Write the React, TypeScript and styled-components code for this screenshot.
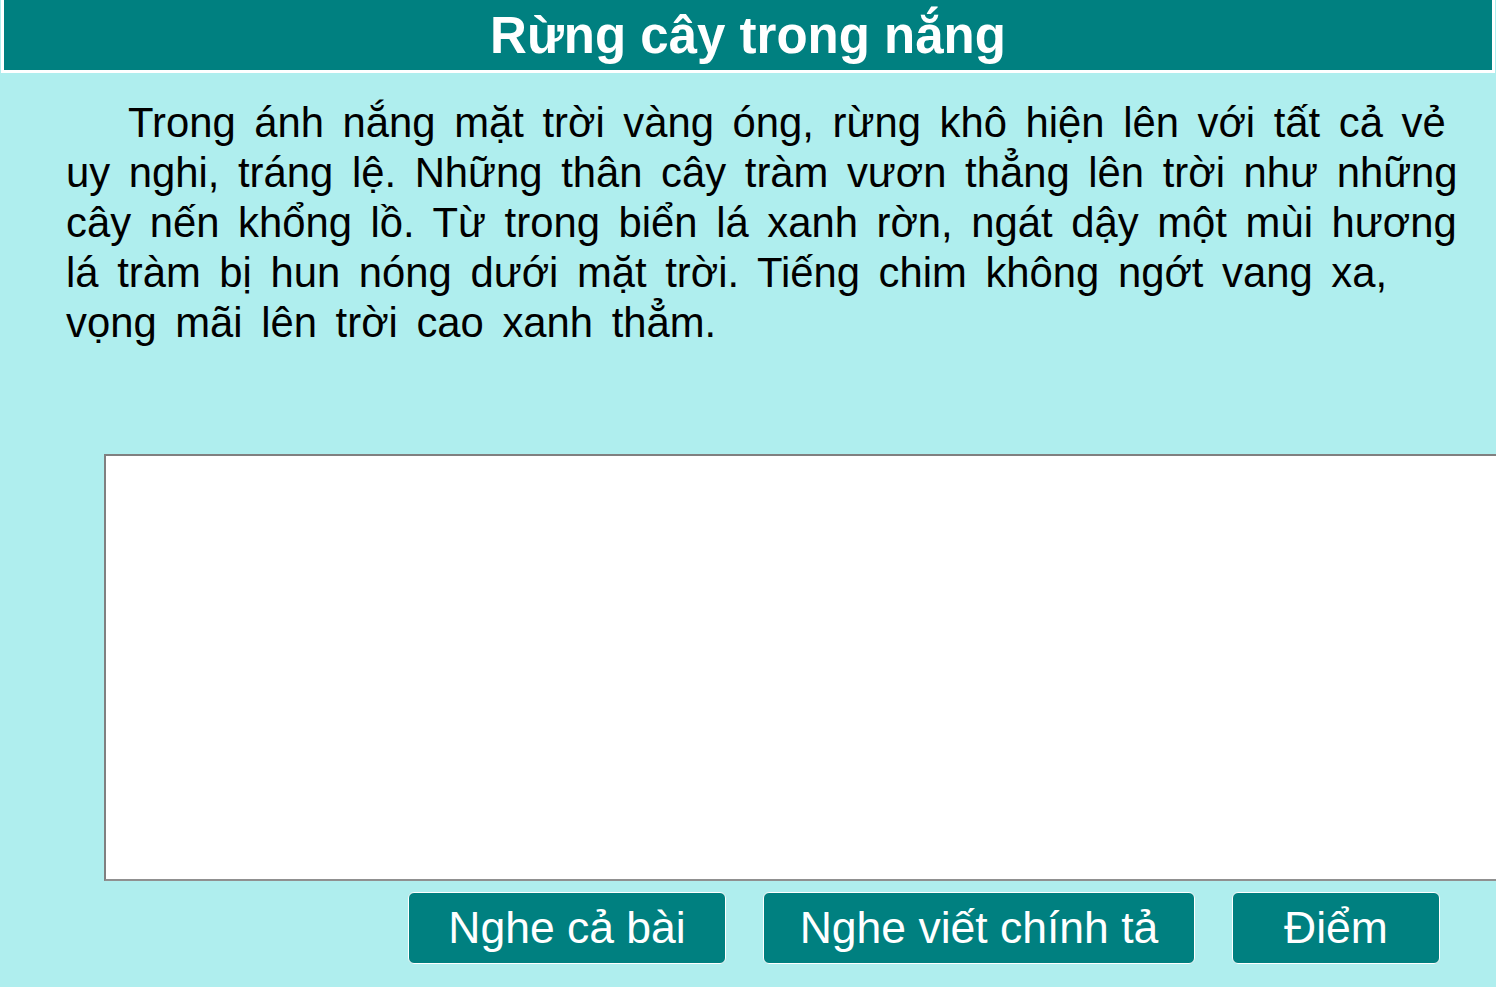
import { createGlobalStyle } from "styled-components";
import styled from "styled-components";

const GlobalStyle = createGlobalStyle`
  html, body {
    margin: 0;
    padding: 0;
    background: #afeeee;
    overflow: hidden;
  }
  body {
    font-family: "Liberation Sans", Arial, sans-serif;
  }
`;

const Page = styled.div`
  width: 1496px;
  height: 987px;
  background: #afeeee;
  display: flex;
  flex-direction: column;
`;

const Header = styled.h1`
  margin: 0 1px;
  height: 70px;
  box-sizing: content-box;
  background: #008080;
  border: 3px solid #ffffff;
  border-top: none;
  color: #ffffff;
  font-size: 51px;
  font-weight: bold;
  line-height: 72px;
  text-align: center;
`;

const Passage = styled.p`
  margin: 25px 0 0 66px;
  font-size: 41.8px;
  line-height: 50px;
  word-spacing: 7px;
  text-indent: 62px;
  white-space: nowrap;
  color: #000000;
`;

const Answer = styled.textarea`
  margin: 106px 0 0 104px;
  width: 1420px;
  height: 427px;
  box-sizing: border-box;
  border: 2px solid #808080;
  border-right-color: #c8c8c8;
  border-bottom-color: #909090;
  background: #ffffff;
  resize: none;
  outline: none;
  font-family: "Liberation Sans", Arial, sans-serif;
  font-size: 36px;
`;

const Toolbar = styled.div`
  display: flex;
  justify-content: flex-end;
  gap: 37px;
  margin-top: 11px;
  padding-right: 56px;
`;

const Button = styled.button<{ $w: number }>`
  width: ${(p) => p.$w}px;
  height: 72px;
  background: #008080;
  color: #ffffff;
  border: 1px solid #ffffff;
  border-radius: 6px;
  font-family: "Liberation Sans", Arial, sans-serif;
  font-size: 44.5px;
  padding: 0;
  cursor: pointer;
`;

const lines = [
  "Trong ánh nắng mặt trời vàng óng, rừng khô hiện lên với tất cả vẻ",
  "uy nghi, tráng lệ. Những thân cây tràm vươn thẳng lên trời như những",
  "cây nến khổng lồ. Từ trong biển lá xanh rờn, ngát dậy một mùi hương",
  "lá tràm bị hun nóng dưới mặt trời. Tiếng chim không ngớt vang xa,",
  "vọng mãi lên trời cao xanh thẳm.",
];

export default function App() {
  return (
    <>
      <GlobalStyle />
      <Page>
        <Header>Rừng cây trong nắng</Header>
        <Passage>
          {lines.map((l, i) => (
            <span key={i}>
              {l}
              {i < lines.length - 1 && <br />}
            </span>
          ))}
        </Passage>
        <Answer />
        <Toolbar>
          <Button $w={318}>Nghe cả bài</Button>
          <Button $w={432}>Nghe viết chính tả</Button>
          <Button $w={208}>Điểm</Button>
        </Toolbar>
      </Page>
    </>
  );
}
